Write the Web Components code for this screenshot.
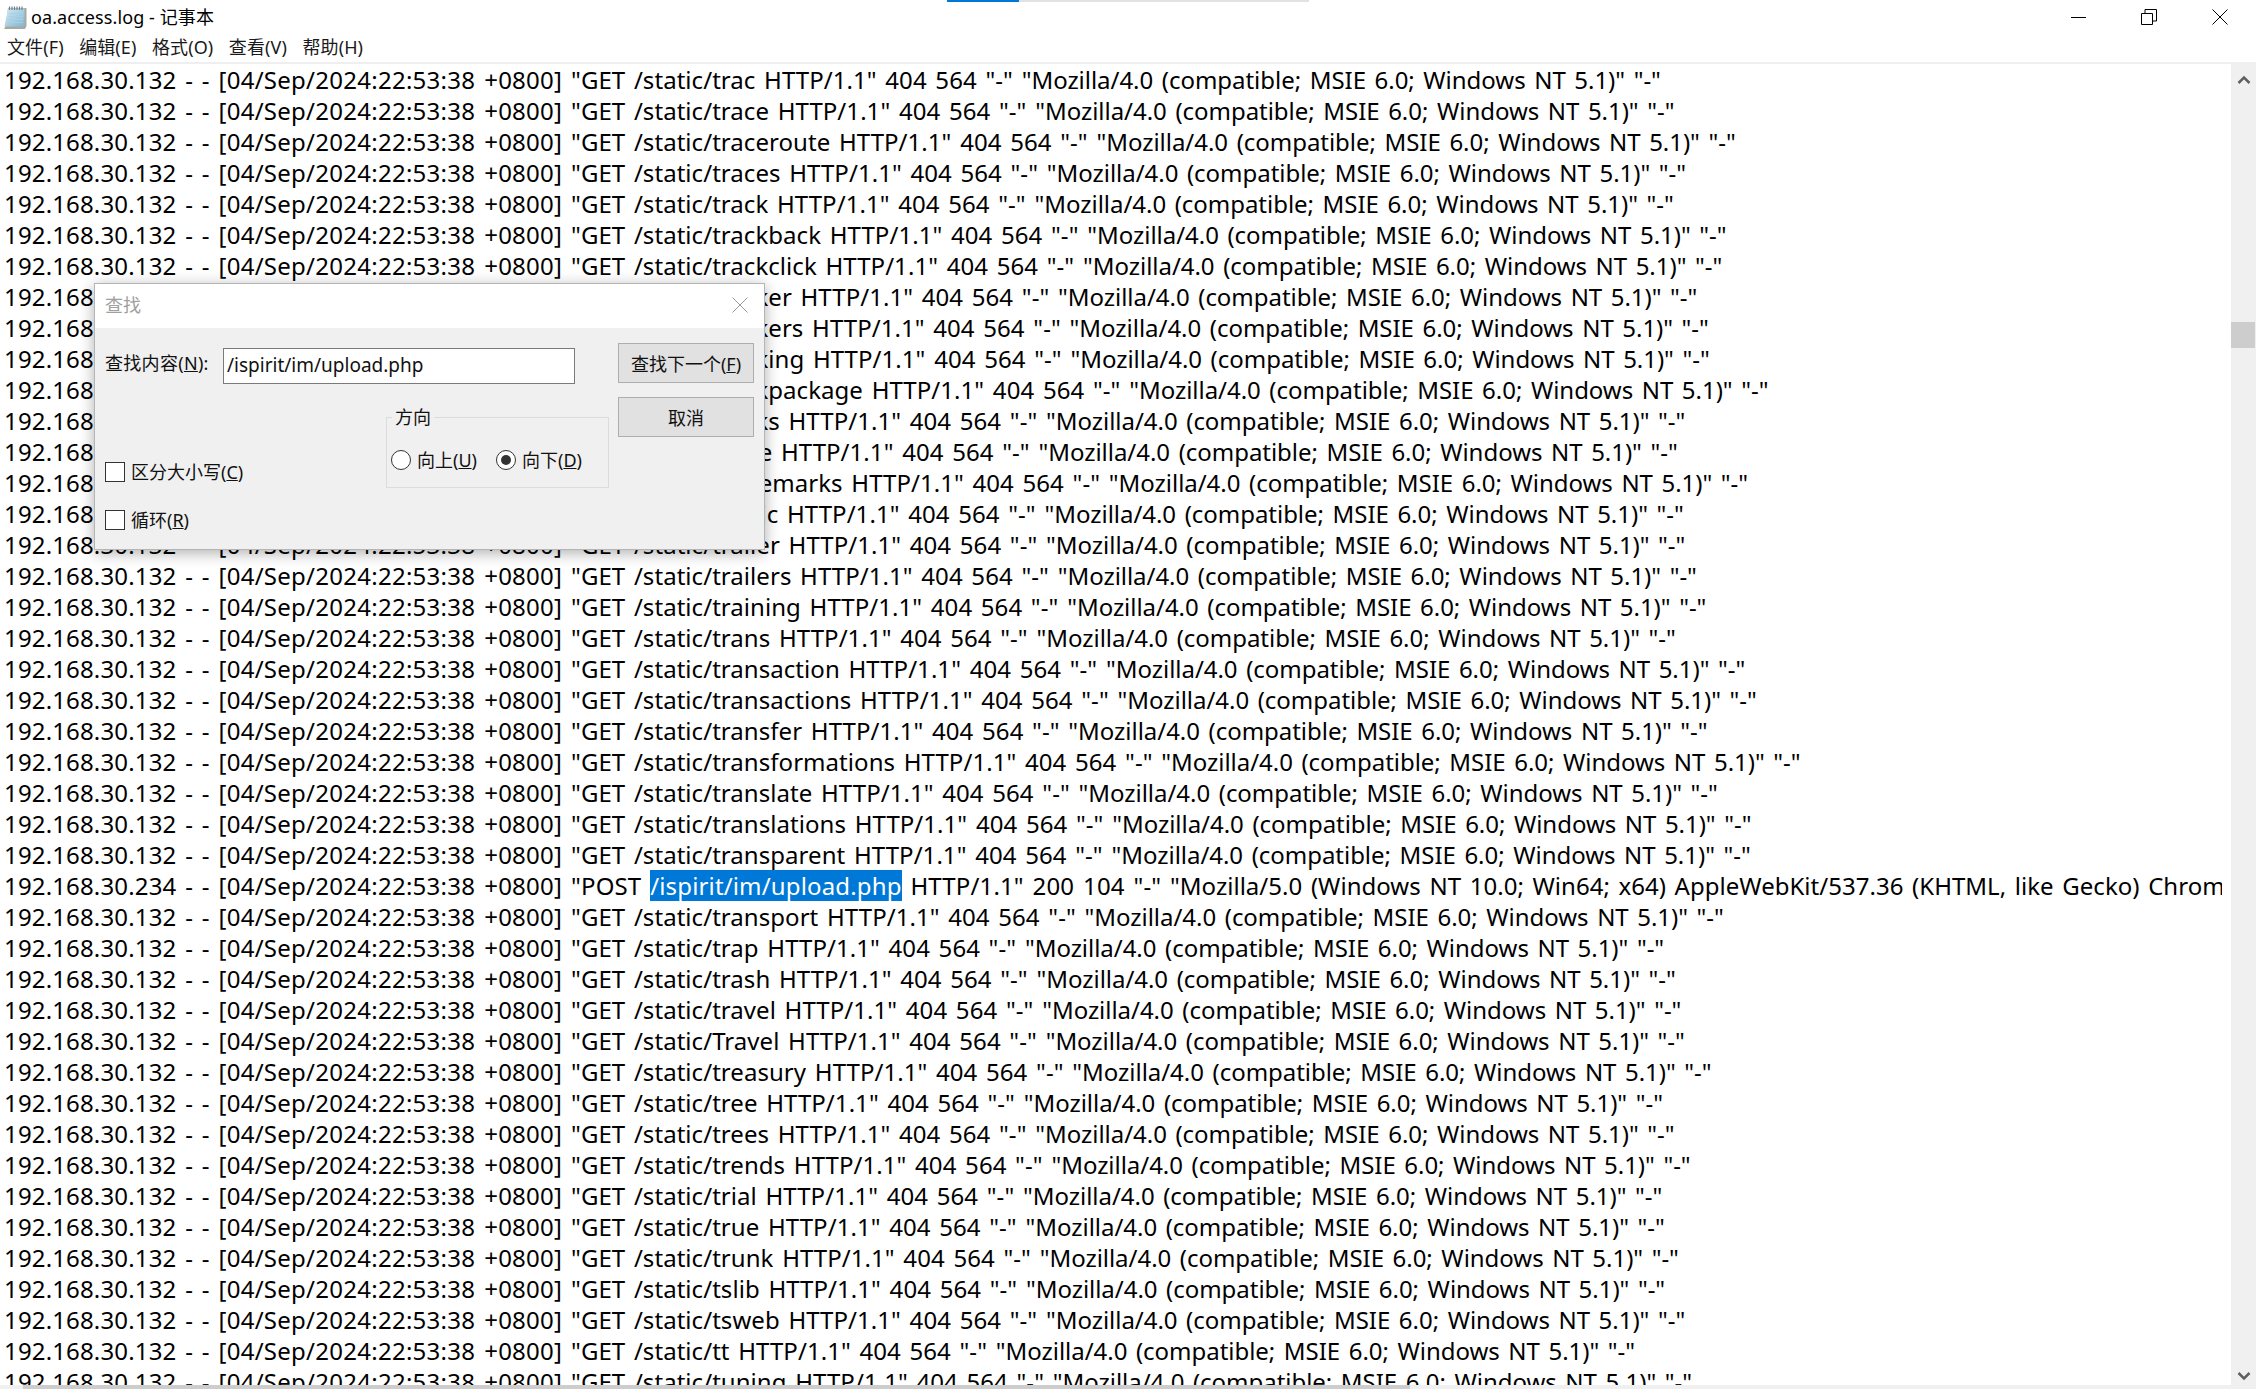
<!DOCTYPE html>
<html lang="zh"><head><meta charset="utf-8"><title>oa.access.log - 记事本</title>
<style>
html,body{margin:0;height:100%;background:#fff;overflow:hidden}
body{font-family:"Noto Sans","Noto Sans CJK SC",sans-serif;color:#000}
</style></head><body>
<notepad-window>
  <title-bar slot="title" text="oa.access.log - 记事本"></title-bar>
  <menu-bar slot="menu"></menu-bar>
  <log-view slot="log"></log-view>
  <find-dialog slot="dialog"></find-dialog>
</notepad-window>
<script>
function def(name, css, html, init){
  customElements.define(name, class extends HTMLElement{
    connectedCallback(){
      if(this.shadowRoot) return;
      const r=this.attachShadow({mode:'open'});
      r.innerHTML='<style>'+css+'</style>'+(typeof html==='function'?html(this):html);
      if(init) init(r,this);
    }
  });
}
const SANS='"Noto Sans","Noto Sans CJK SC",sans-serif';
def('notepad-window',`
:host{display:block;position:relative;width:100%;height:100vh;overflow:hidden;background:#fff}
.wrap{display:flex;flex-direction:column;height:100%}
.strip{position:absolute;top:0;left:947px;width:362px;height:2px;background:#e2e2e2}
.strip i{display:block;width:72px;height:2px;background:#0078d7}
`,`<div class="wrap"><slot name="title"></slot><slot name="menu"></slot><slot name="log"></slot></div>
<div class="strip"><i></i></div><slot name="dialog"></slot>`);

def('title-bar',`
:host{display:flex;align-items:center;height:34px;flex:none;font:18px/34px ${SANS};color:#000}
svg{display:block;flex:none}
.ic{margin-left:3px;width:24px;height:24px}
.t{margin-left:4px;flex:1;white-space:nowrap;letter-spacing:.1px}
.c{width:70px;height:34px;display:flex;align-items:center;justify-content:center;flex:none}
`,h=>`<svg class="ic" viewBox="0 0 24 24"><defs><linearGradient id="n" x1="0" y1="0" x2="1" y2="1"><stop offset="0" stop-color="#d6ebf5"/><stop offset="1" stop-color="#7fb6d3"/></linearGradient></defs>
<path d="M5 3H23.500V21L22 24H1L3 20.500Z" fill="#a9a9a0"/><path d="M5 3.500H21.500V21.500H1.500Z" fill="url(#n)"/>
<path d="M6.500 8.500H20M6 11.500H20M5.500 14.500H20M5 17.500H20" stroke="#a8cfe2" stroke-width="1"/>
<path d="M6.500 1.500V5M9 1.500V5M11.500 1.500V5M14 1.500V5M16.500 1.500V5M19 1.500V5" stroke="#6f7f88" stroke-width="1.200"/></svg>
<span class="t">${h.getAttribute('text')}</span>
<span class="c"><svg width="16" height="16" viewBox="0 0 16 16"><path d="M0 8.500H15" stroke="#000"/></svg></span>
<span class="c"><svg width="16" height="16" viewBox="0 0 16 16" fill="none" stroke="#000"><path d="M.5 4.500H11.500V15.500H.5Z"/><path d="M4 4.500V.5H15.500V12H11.500"/></svg></span>
<span class="c" style="width:72px"><svg width="16" height="16" viewBox="0 0 16 16"><path d="M.5.5L15.500 15.500M15.500.5L.5 15.500" stroke="#000"/></svg></span>`);

def('menu-bar',`
:host{display:flex;height:28px;flex:none;padding-left:7px;gap:15.500px;font:18px/26px ${SANS};color:#1a1a1a;border-bottom:2px solid #efefef;box-sizing:content-box}
span{white-space:nowrap;letter-spacing:.1px}
`,`<span>文件(F)</span><span>编辑(E)</span><span>格式(O)</span><span>查看(V)</span><span>帮助(H)</span>`);

const WORDS=['trac','trace','traceroute','traces','track','trackback','trackclick','tracker','trackers','tracking','trackpackage','tracks','trade','trademarks','traffic','trailer','trailers','training','trans','transaction','transactions','transfer','transformations','translate','translations','transparent',null,'transport','trap','trash','travel','Travel','treasury','tree','trees','trends','trial','true','trunk','tslib','tsweb','tt','tuning'];
def('log-view',`
:host{display:grid;grid-template-columns:1fr 25px;grid-template-rows:1fr 4px;flex:1;min-height:0;overflow:hidden}
.text{overflow:hidden;font:24px/31px ${SANS};color:#000;padding-left:4px;margin-right:9px;white-space:pre;letter-spacing:.15px;word-spacing:2.400px}
.row{height:31px;overflow:hidden}
.d{letter-spacing:.26px}
.p{letter-spacing:.05px}
.ua{letter-spacing:-.035px}
.ub{letter-spacing:.02px}
mark{background:#0078d7;color:#fff}
.v{grid-column:2;grid-row:1/3;background:#f0f0f0;display:flex;flex-direction:column;position:relative}
.arr{height:31px;display:flex;align-items:center;justify-content:center;flex:none}
.sp1{height:227px;flex:none}
.thumb{height:26px;width:24px;background:#cdcdcd;flex:none}
.sp2{flex:1}
.h{grid-column:1;grid-row:2;background:#f0f0f0;padding-left:23px}
.h i{display:block;height:4px;width:1387px;background:#cdcdcd}
`,()=>{
 const D='<span class="d">[04/Sep/2024:22:53:38 +0800]</span>';
 const rows=WORDS.map(w=> w===null
 ? `<div class="row">192.168.30.234 - - ${D} "POST <mark>/ispirit/im/upload.php</mark> HTTP/1.1" 200 104 "-" <span class="ub">"Mozilla/5.0 (Windows NT 10.0; Win64; x64) AppleWebKit/537.36 (KHTML, like Gecko) Chrome/127.0.0.0 Safari/537.36" "-"</span></div>`
 : `<div class="row">192.168.30.132 - - ${D} <span class="p">"GET /static/${w} HTTP/1.1" 404 564 "-"</span> <span class="ua">"Mozilla/4.0 (compatible; MSIE 6.0; Windows NT 5.1)" "-"</span></div>`).join('');
 return `<div class="text">${rows}</div>
 <div class="v"><div class="arr"><svg width="14" height="10" viewBox="0 0 14 10"><path d="M1.500 8L7 2.500L12.500 8" fill="none" stroke="#606060" stroke-width="2.500"/></svg></div><div class="sp1"></div><div class="thumb"></div><div class="sp2"></div><div class="arr" style="height:26px"><svg width="14" height="10" viewBox="0 0 14 10"><path d="M1.500 2L7 7.500L12.500 2" fill="none" stroke="#606060" stroke-width="2.500"/></svg></div></div>
 <div class="h"><i></i></div>`;
});

def('win-button',`
:host{display:flex;align-items:center;justify-content:center;box-sizing:border-box;width:136px;height:40px;background:#e1e1e1;border:1px solid #adadad;font:18px ${SANS};color:#111}
`,`<slot></slot>`);
def('check-box',`
:host{display:flex;align-items:center;gap:6px;font:18px/24px ${SANS};color:#111;white-space:nowrap}
i{display:block;box-sizing:border-box;width:20px;height:20px;background:#fff;border:1px solid #333;flex:none}
`,`<i></i><slot></slot>`);
def('radio-box',`
:host{display:flex;align-items:center;gap:6px;font:18px/24px ${SANS};color:#111;white-space:nowrap}
i{display:flex;align-items:center;justify-content:center;box-sizing:border-box;width:20px;height:20px;border-radius:50%;background:#fff;border:1px solid #333;flex:none}
:host([on]) i::after{content:"";width:10px;height:10px;border-radius:50%;background:#333}
`,`<i></i><slot></slot>`);

def('find-dialog',`
:host{position:absolute;left:94px;top:283px;width:671px;height:267px;box-sizing:border-box;display:flex;flex-direction:column;background:#f0f0f0;border:1px solid #b5b5b5;box-shadow:0 3px 14px rgba(0,0,0,.32);font:18px/24px ${SANS};color:#111}
.tb{height:44px;flex:none;background:#fff;display:flex;align-items:center;justify-content:space-between;padding:0 16px 2px 10px;box-sizing:border-box;color:#a0a0a0}
.tb svg{display:block}
.body{flex:1;display:grid;grid-template-columns:118px 352px 1fr 136px;grid-template-rows:15px 40px 14px 40px 1fr;padding-right:10px;padding-left:10px}
.lbl{grid-column:1;grid-row:2;align-self:center;white-space:nowrap;letter-spacing:.3px}
.edit{grid-column:2;grid-row:2;box-sizing:border-box;height:36px;margin-top:5px;background:#fff;border:1px solid #7a7a7a;padding-left:3px;font-size:19px;line-height:32px;color:#111;white-space:nowrap}
.b1{grid-column:4;grid-row:2}
.b2{grid-column:4;grid-row:4}
u{text-decoration:underline}
.low{grid-column:1/4;grid-row:3/6;display:flex;justify-content:space-between;padding-right:9px;position:relative}
.checks{display:flex;flex-direction:column;gap:24px;padding-top:77px}
.group{box-sizing:border-box;margin:0;width:223px;height:71px;margin-top:34px;border:1px solid #dcdcdc;position:relative;display:flex;align-items:center;gap:19px;padding:14px 0 0 4px}
.legend{position:absolute;left:5px;top:-13px;background:#f0f0f0;padding:0 3px;line-height:24px}
`,`<div class="tb"><span>查找</span><svg width="16" height="16" viewBox="0 0 16 16"><path d="M.5.5L15.500 15.500M15.500.5L.5 15.500" stroke="#999"/></svg></div>
<div class="body">
<span class="lbl">查找内容(<u>N</u>):</span>
<div class="edit">/ispirit/im/upload.php</div>
<win-button class="b1"><span>查找下一个(<u>F</u>)</span></win-button>
<win-button class="b2">取消</win-button>
<div class="low">
 <div class="checks"><check-box><span>区分大小写(<u>C</u>)</span></check-box><check-box><span>循环(<u>R</u>)</span></check-box></div>
 <div class="group"><span class="legend">方向</span><radio-box><span>向上(<u>U</u>)</span></radio-box><radio-box on><span>向下(<u>D</u>)</span></radio-box></div>
</div>
</div>`);
</script>
</body></html>
